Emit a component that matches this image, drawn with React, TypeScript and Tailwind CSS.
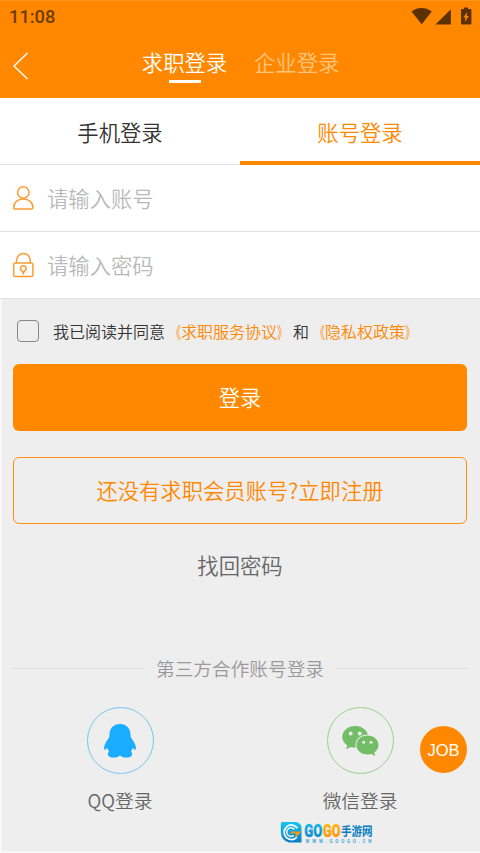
import type { ReactNode } from "react";

function StatusBar() {
  return (
    <div className="flex h-8 items-center justify-between pl-[9px] pr-[8px] text-[#5c3100]">
      <span className="font-[Roboto,sans-serif] text-[18.3px] font-medium leading-8 text-[#6f3b00]">
        11:08
      </span>
      <svg width="62" height="20" viewBox="0 0 62 20" fill="currentColor" aria-hidden="true">
        {/* Wi-Fi */}
        <path d="M1.500 4.400C7.500-.2 15.500-.2 21.800 4.400L11.700 17.200Z" />
        {/* Réseau mobile */}
        <path d="M40.900 2.300V17.500H25.400Z" />
        {/* Batterie en charge */}
        <path
          fillRule="evenodd"
          d="M54 .5h4v1.500h2.200q1.200 0 1.200 1.200v13.100q0 1.200-1.200 1.200h-8q-1.200 0-1.200-1.200V3.200q0-1.200 1.200-1.200H54ZM57.200 5l-3.900 5.600h2.200l-.6 4.300 3.900-5.900h-2.200Z"
        />
      </svg>
    </div>
  );
}

function Header() {
  return (
    <header className="h-[98px] border-t border-[#ff9624] bg-[#ff8800]">
      <StatusBar />
      <div className="flex h-[60px] items-center">
        <button type="button" aria-label="返回" className="w-[142px] pl-[12px]">
          <svg width="18" height="28" viewBox="0 0 18 28" fill="none" className="mt-[5px]">
            <path d="M15.500 1 2 14l13.500 13" stroke="#fff" strokeWidth="1.400" />
          </svg>
        </button>
        <div className="mt-[2px] flex gap-[27px] text-[21.33px] leading-8">
          <button type="button" className="flex w-[85px] flex-col items-center text-white">
            <span className="whitespace-nowrap">求职登录</span>
            <span className="mt-[2px] h-[3px] w-8 bg-white" />
          </button>
          <button type="button" className="flex items-start text-[#ffc681]">
            企业登录
          </button>
        </div>
      </div>
    </header>
  );
}

function LoginTabs() {
  return (
    <div className="grid h-[67px] grid-cols-2 bg-white text-[21.33px]">
      <button type="button" className="border-b border-[#e2e2e2] pt-px text-[#333]">
        手机登录
      </button>
      <button type="button" className="border-b-4 border-[#ff8800] pt-[4px] text-[#ff8800]">
        账号登录
      </button>
    </div>
  );
}

function Field({ icon, placeholder, type }: { icon: ReactNode; placeholder: string; type: string }) {
  return (
    <label className="flex h-[67px] items-center border-b border-[#e2e2e2] bg-white pl-[12px]">
      {icon}
      <input
        type={type}
        placeholder={placeholder}
        className="mb-[2px] ml-[12px] h-10 flex-1 bg-transparent text-[21.33px] outline-none placeholder:text-[#b9b9b9]"
      />
    </label>
  );
}

function UserIcon() {
  return (
    <svg width="23" height="26" viewBox="0 0 23 26" fill="none" stroke="#ff9b30" strokeWidth="1.500">
      <circle cx="11.300" cy="7.500" r="5.700" />
      <path d="M1.700 22.400c0-5 3.800-8.400 9.600-8.400s9.600 3.400 9.600 8.400q0 1.700-1.700 1.700H3.400q-1.700 0-1.700-1.700Z" />
    </svg>
  );
}

function LockIcon() {
  return (
    <svg width="23" height="26" viewBox="0 0 23 26" fill="none" stroke="#ff9b30" strokeWidth="1.500">
      <rect x="1.700" y="11" width="19.200" height="13.600" rx="1.700" />
      <path d="M4.600 11V8.300a6.800 6.800 0 0 1 13.600 0V11M10.300 19.100a2.800 2.800 0 1 1 2 0l-1 2.300Z" />
    </svg>
  );
}

// Les guillemets sont resserrés contre le titre du document
function DocLink({ title }: { title: string }) {
  return (
    <a className="text-[#ff8800]">
      <span className="inline-block origin-right scale-x-[0.62]">《</span>
      {title}
      <span className="inline-block origin-left scale-x-[0.62]">》</span>
    </a>
  );
}

function QQIcon() {
  return (
    <svg width="34" height="36" viewBox="0 0 34 36" fill="#19acff" aria-hidden="true">
      <path d="M17 1C10.500 1 6.700 5.400 6.500 11.300c-.1 1.200.1 2.300-.6 3.500C3.300 18.500 1.200 21.500 1.100 25c0 1.300.3 1.900.8 1.800.9-.2 1.800-1.400 2.500-1.700.2 1.200.9 2.300 1.700 3.300-.9.500-1.200 1.300-1.200 2.500 0 2.200 2.400 3.700 6.100 3.700 2.600 0 4.700-.8 6-2.400 1.300 1.600 3.400 2.400 6 2.400 3.700 0 6.100-1.500 6.100-3.700 0-1.200-.3-2-1.200-2.500.8-1 1.500-2.100 1.700-3.300.7.300 1.600 1.500 2.500 1.700.5.100.8-.5.800-1.800-.1-3.500-2.200-6.500-4.800-10.200-.7-1.200-.5-2.300-.6-3.500C27.300 5.400 23.500 1 17 1Z" />
    </svg>
  );
}

function WechatIcon() {
  return (
    <svg width="38" height="32" viewBox="0 0 38 32" aria-hidden="true">
      <path
        fill="#72bd65"
        d="M14.200 1C7 1 1.300 5.800 1.300 11.900c0 3.600 2 6.500 5.100 8.500L5 24.200l4.700-2.300c1.500.4 3 .7 4.500.7 7.200 0 13-4.800 13-10.700S21.400 1 14.200 1Z"
      />
      <ellipse cx="26.400" cy="20" rx="12" ry="10.600" fill="#eee" />
      <path
        fill="#72bd65"
        d="M26.400 10.500c-6.100 0-11 4.200-11 9.500s4.900 9.500 11 9.500c1.300 0 2.700-.2 3.900-.6l3.900 2-1-3.300c2.600-1.800 4.300-4.400 4.300-7.600 0-5.300-5-9.500-11.100-9.500Z"
      />
      <g fill="#eee">
        <circle cx="9.700" cy="8.500" r="1.900" />
        <circle cx="18.700" cy="8.500" r="1.900" />
        <circle cx="22.700" cy="17.300" r="1.500" />
        <circle cx="30" cy="17.300" r="1.500" />
      </g>
    </svg>
  );
}

function ThirdParty({ ring, label, children }: { ring: string; label: string; children: ReactNode }) {
  return (
    <button type="button" className="flex flex-col items-center text-[18.67px] text-[#666]">
      <span className={`flex h-[67px] w-[67px] items-center justify-center rounded-full border ${ring}`}>
        {children}
      </span>
      <span className="mt-[10px] leading-8">{label}</span>
    </button>
  );
}

function SiteLogo() {
  return (
    <svg width="96" height="24" viewBox="0 0 96 24" className="absolute left-[280px] top-[821px] overflow-visible">
      <defs>
        <linearGradient id="logoBlue" x2="0" y2="1">
          <stop stopColor="#18c4ef" />
          <stop offset="1" stopColor="#087cc3" />
        </linearGradient>
        <linearGradient id="logoOrange" x2="0" y2="1">
          <stop stopColor="#ffc20e" />
          <stop offset="1" stopColor="#ff8a00" />
        </linearGradient>
      </defs>
      <path d="M2.500 1h12.500q6.500 0 6.500 6.500v14H9Q1 19 .8 11V3Q.8 1 2.500 1Z" fill="url(#logoBlue)" />
      <g fill="none">
        <path d="M17.500 7.200A7.300 7.300 0 1 0 17 16" stroke="#fff" strokeWidth="1.800" />
        <path d="M14.500 8.500a4.300 4.300 0 1 0-.8 6" stroke="#d5f2fc" strokeWidth="1.600" />
        <path d="M10.500 11.400h8.500l-3.500 4" stroke="#f49a16" strokeWidth="2" />
      </g>
      <g className="font-[Roboto,sans-serif] font-black" fontSize="18" strokeWidth="0.300">
        <text x="24.300" y="15.800" textLength="18" lengthAdjust="spacingAndGlyphs" fill="url(#logoBlue)" stroke="url(#logoBlue)">
          GO
        </text>
        <text x="43" y="15.800" textLength="17.500" lengthAdjust="spacingAndGlyphs" fill="url(#logoOrange)" stroke="url(#logoOrange)">
          GO
        </text>
      </g>
      <text x="61" y="15" fontSize="12.500" textLength="31.500" lengthAdjust="spacingAndGlyphs" className="font-bold" fill="#087fc2">
        手游网
      </text>
      <text x="25.500" y="21.700" fontSize="4.500" textLength="66" className="font-[Roboto,sans-serif] font-bold" fill="#48a9d6">
        WWW.GOOGO.CN
      </text>
    </svg>
  );
}

export default function App() {
  return (
    <div className="relative h-[853px] w-[480px] overflow-hidden bg-[#eee] font-['Noto_Sans_CJK_SC',sans-serif] font-[350]">
      <Header />
      <LoginTabs />
      <Field type="text" placeholder="请输入账号" icon={<UserIcon />} />
      <Field type="password" placeholder="请输入密码" icon={<LockIcon />} />

      <main className="h-[554px] border-b-2 border-l-2 border-[#f7f7f7] pl-[11px] pr-[13px]">
        <div className="flex h-[65px] items-center">
          <button
            type="button"
            aria-label="同意协议"
            className="mb-[2px] ml-[4px] h-[22px] w-[22px] rounded-[4px] border border-[#888]"
          />
          <p className="mb-[2px] ml-[14px] whitespace-nowrap text-base text-[#333]">
            我已阅读并同意
            <DocLink title="求职服务协议" />和<DocLink title="隐私权政策" />
          </p>
        </div>

        <button
          type="button"
          className="h-[67px] w-full rounded-[6px] bg-[#ff8800] pb-[2px] text-[21.33px] text-white"
        >
          登录
        </button>
        <button
          type="button"
          className="mt-[26px] h-[67px] w-full rounded-[6px] border border-[#ff8f12] pb-[2px] text-[21.33px] text-[#ff8800]"
        >
          还没有求职会员账号?立即注册
        </button>
        <button type="button" className="mt-[25px] block h-8 w-full text-[21.33px] leading-8 text-[#666]">
          找回密码
        </button>

        <div className="mt-[71px] flex h-8 items-center gap-[12px] text-[18.67px] text-[#999]">
          <span className="h-px flex-1 bg-[#ddd]" />
          <span>第三方合作账号登录</span>
          <span className="h-px flex-1 bg-[#ddd]" />
        </div>

        <div className="-ml-[13px] -mr-[13px] mt-[23px] grid grid-cols-2">
          <ThirdParty ring="border-[#76c7f3]" label="QQ登录">
            <QQIcon />
          </ThirdParty>
          <ThirdParty ring="border-[#9bd092]" label="微信登录">
            <WechatIcon />
          </ThirdParty>
        </div>
      </main>

      <button
        type="button"
        className="absolute left-[420px] top-[726px] h-[47px] w-[47px] rounded-full bg-[#ff8800] pt-px font-['Liberation_Sans',sans-serif] text-[16.5px] text-white"
      >
        JOB
      </button>
      <SiteLogo />
    </div>
  );
}
